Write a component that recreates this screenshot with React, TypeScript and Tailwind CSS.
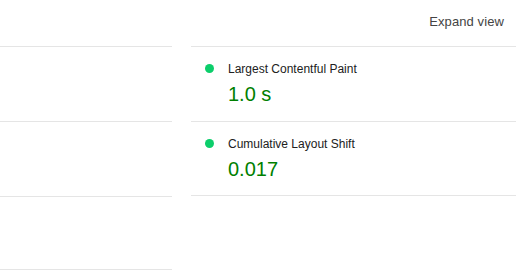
import React from 'react'

interface Metric {
  label: string
  value: string
}

const metrics: Metric[] = [
  { label: 'Largest Contentful Paint', value: '1.0 s' },
  { label: 'Cumulative Layout Shift', value: '0.017' },
]

function MetricRow({ label, value }: Metric) {
  return (
    <div className="h-[75px] border-t border-[#e5e5e5] flex pt-[15px]">
      <div className="w-[37px] flex justify-end pr-[14px] pt-[2px]">
        <span className="block w-[9px] h-[9px] rounded-full bg-[#0cce6b]" />
      </div>
      <div className="flex flex-col">
        <span className="text-[12px] leading-[14px] text-[#212121]">{label}</span>
        <span className="text-[20px] leading-[24px] mt-[6px] text-[#008000]">{value}</span>
      </div>
    </div>
  )
}

export default function App() {
  return (
    <div className="w-[520px] h-[272px] bg-white overflow-hidden font-['Liberation_Sans',Arial,sans-serif]">
      {/* header */}
      <div className="h-[46px] flex justify-end items-center pr-[16px] pb-[2px]">
        <span className="text-[13px] tracking-[0.1px] text-[#444]">Expand view</span>
      </div>

      <div className="flex gap-[19px]">
        {/* left column (empty rows) */}
        <div className="w-[172px]">
          <div className="h-[75px] border-t border-[#e5e5e5]" />
          <div className="h-[75px] border-t border-[#e5e5e5]" />
          <div className="h-[74px] border-t border-b border-[#e5e5e5]" />
        </div>

        {/* right column */}
        <div className="w-[325px]">
          <MetricRow {...metrics[0]} />
          <div className="h-[74px] border-t border-[#e5e5e5] flex pt-[15px]">
            <div className="w-[37px] flex justify-end pr-[14px] pt-[2px]">
              <span className="block w-[9px] h-[9px] rounded-full bg-[#0cce6b]" />
            </div>
            <div className="flex flex-col">
              <span className="text-[12px] leading-[14px] text-[#212121]">{metrics[1].label}</span>
              <span className="text-[20px] leading-[24px] mt-[6px] text-[#008000]">{metrics[1].value}</span>
            </div>
          </div>
          <div className="border-t border-[#e5e5e5]" />
        </div>
      </div>
    </div>
  )
}
